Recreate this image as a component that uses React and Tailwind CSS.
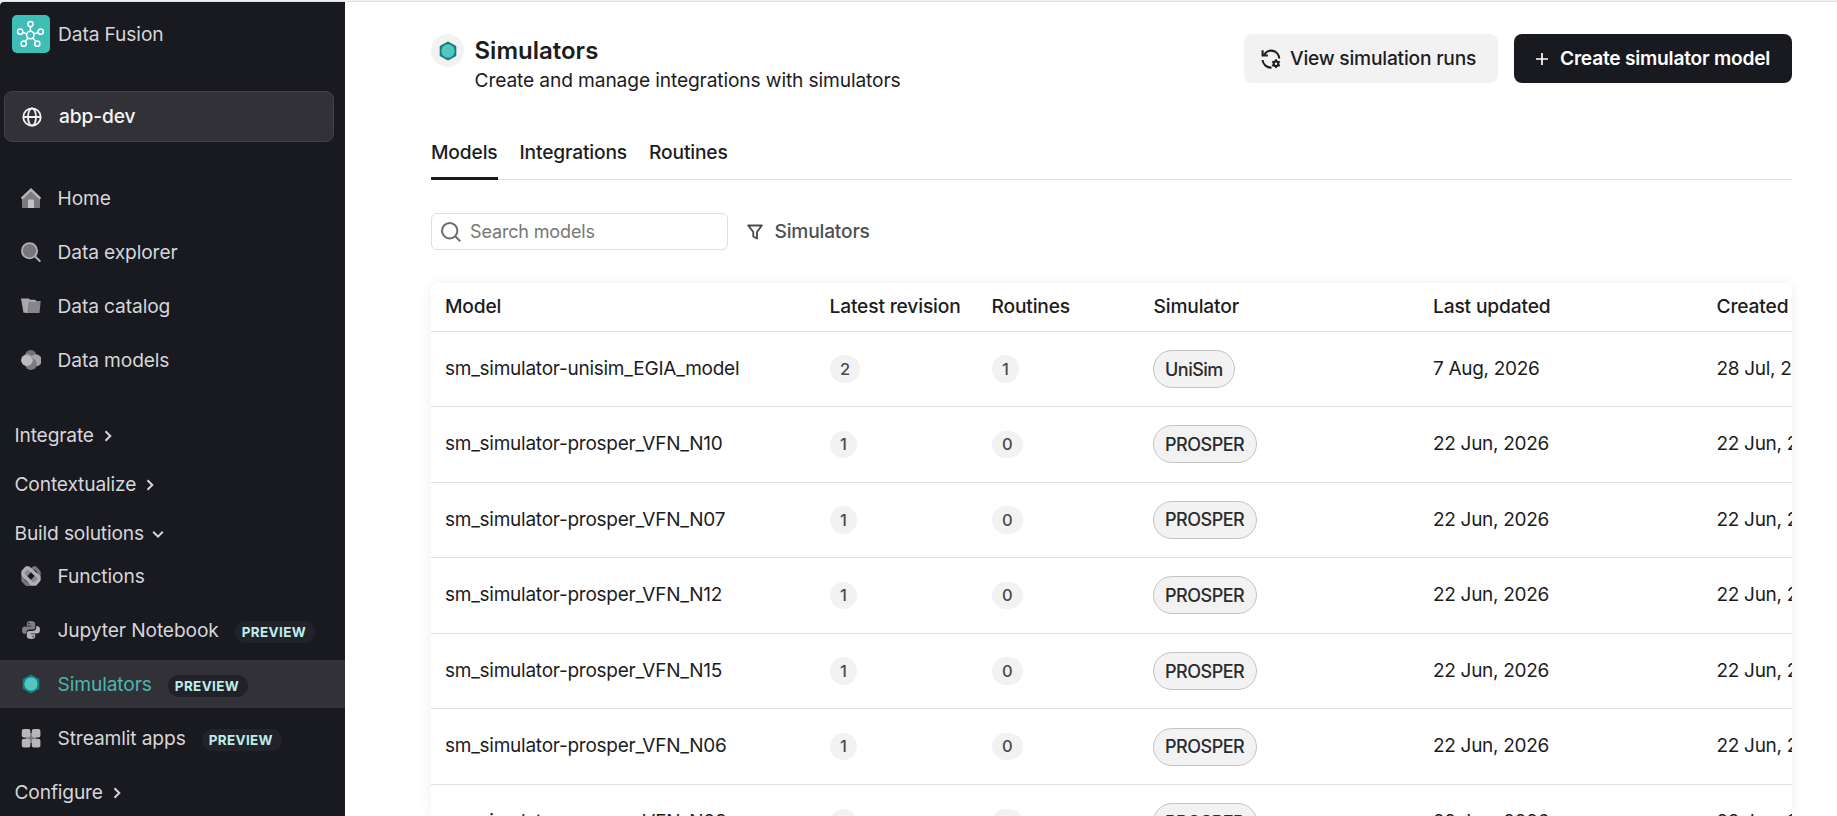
import React from "react";

const Home = () => (
  <svg viewBox="0 0 20 20" className="size-5 shrink-0">
    <path d="M1 9l9-7 9 7v10a1 1 0 0 1-1 1H2a1 1 0 0 1-1-1z" fill="#7b7b80" />
    <path d="M7 20v-7.500a1 1 0 0 1 1-1h4a1 1 0 0 1 1 1V20z" fill="#c3c3c6" />
    <path d="M1.400 9.800L10 1.700l8.600 8.100" fill="none" stroke="#b5b5b9" strokeWidth="2.500" strokeLinecap="round" />
  </svg>
);
const Explorer = () => (
  <svg viewBox="0 0 20 20" className="size-5 shrink-0">
    <circle cx="8.500" cy="8.700" r="7.600" fill="#77777b" stroke="#b1b1b5" strokeWidth="1.800" />
    <path d="M14.200 14.500l4.500 4.500" stroke="#b1b1b5" strokeWidth="2" strokeLinecap="round" />
  </svg>
);
const Catalog = () => (
  <svg viewBox="0 0 20 20" className="size-5 shrink-0">
    <path d="M0 2.500h8l1 1.200h5.500v13H2.500z" fill="#a8a8ac" />
    <path d="M6.400 5.800l.8-.8h12.500L18.500 17H5.400z" fill="#85858a" />
    <path d="M5.600 17l1-10.800 1-1H15" fill="none" stroke="#c4c4c7" strokeWidth=".8" />
  </svg>
);
const DataModels = () => (
  <svg viewBox="0 0 20 20" className="size-5 shrink-0">
    <circle cx="9.700" cy="5.900" r="5.900" fill="#717176" />
    <circle cx="14.300" cy="10.200" r="5.700" fill="#a3a3a7" />
    <circle cx="9.900" cy="14" r="6" fill="#7b7b80" />
    <path d="M11.500 8.200a6 6 0 0 1 3.800 8.200A5.700 5.700 0 0 0 14.500 4.500z" fill="#a3a3a7" />
    <circle cx="5.900" cy="10.200" r="5.800" fill="#bcbcbf" />
    <path d="M4.500 4.800c3-1 6.200.5 7 4" stroke="#9a9a9e" strokeWidth="1.300" fill="none" />
  </svg>
);
const Functions = () => (
  <svg viewBox="0 0 20 20" className="size-5 shrink-0" fill="none" strokeLinejoin="round">
    <path d="M12.800 2h1.700L18 6v3L9 18.200H5.500L2 14.500v-3.500z" stroke="#77777b" strokeWidth="3.400" />
    <path d="M7.200 1.900h-1.700L2 5.800v3L11 18h3.500L18 14v-3z" fill="#8a8a8e" stroke="#b0b0b4" strokeWidth="3.400" />
    <path d="M10 6.300l3.700 3.700-3.700 3.700L6.300 10z" fill="#191920" />
  </svg>
);
const Python = () => (
  <svg viewBox="0 0 20 20" className="size-5 shrink-0">
    <path d="M9.800 1C7 1 5.800 2 5.800 3.800v2h4.400v.7H4C1.800 6.500 1 8 1 10.200s.8 3.500 2.400 3.500h2v-1.500c0-1.700 1.300-2.800 3-2.800h3.800c1.200 0 2-1 2-2.200V3.800C14.200 2 12.600 1 9.800 1z" fill="#7f7f83" />
    <path d="M10.200 19c2.800 0 4-1 4-2.800v-2H9.800v-.7H16c2.200 0 3-1.500 3-3.700s-.8-3.500-2.400-3.500h-1.500v1.800c0 1.700-1.300 2.800-3 2.800H8.300c-1.600 0-2.500 1-2.500 2.400v2.900c0 1.800 1.600 2.800 4.400 2.800z" fill="#b1b1b5" />
    <circle cx="7.900" cy="3.500" r=".8" fill="#191920" />
    <circle cx="12.100" cy="16.500" r=".8" fill="#191920" />
  </svg>
);
const Hexagon = () => (
  <svg viewBox=".4 .4 19.2 19.2" className="size-5 shrink-0">
    <path d="M10 2l6.900 4v8L10 18l-6.900-4V6z" fill="#127f80" stroke="#127f80" strokeWidth="2.200" strokeLinejoin="round" />
    <circle cx="10" cy="10" r="6.400" fill="#56c5c2" />
  </svg>
);
const Grid = () => (
  <svg viewBox="0 0 20 20" className="size-5 shrink-0">
    <rect x="5" y="5" width="10" height="10" fill="#77777b" />
    <rect x=".8" y="1" width="8.600" height="8.600" rx="2" fill="#b7b7ba" />
    <rect x="10.800" y="1" width="8.600" height="8.600" rx="2" fill="#b7b7ba" />
    <rect x=".8" y="10.800" width="8.600" height="8.600" rx="2" fill="#b7b7ba" />
    <rect x="10.800" y="10.800" width="8.600" height="8.600" rx="2" fill="#b7b7ba" />
  </svg>
);
const Logo = () => (
  <svg viewBox="0 0 38 38" className="size-[38px] shrink-0" fill="none" stroke="#fff" strokeWidth="1.500">
    <rect width="38" height="38" rx="5" fill="#3fbdb7" stroke="none" />
    <circle cx="18.300" cy="20" r="3.700" />
    <circle cx="18.500" cy="9" r="2.600" />
    <circle cx="8.200" cy="16.700" r="2.600" />
    <circle cx="28.700" cy="16.700" r="2.600" />
    <circle cx="11.700" cy="28.700" r="2.600" />
    <circle cx="25.300" cy="28.700" r="2.600" />
    <path d="M18.400 11.600v4.700M10.700 17.500l4.100 1.300M26.200 17.500l-4.300 1.300M13.200 26.600l2.800-3.600M23.800 26.600L20.700 23" />
  </svg>
);
const Globe = () => (
  <svg viewBox="0 0 20 20" className="size-5 shrink-0" fill="none" stroke="#f3f3f3" strokeWidth="1.800">
    <circle cx="10" cy="10" r="8.700" />
    <ellipse cx="10" cy="10" rx="4" ry="8.700" />
    <path d="M1.300 10h17.400" />
  </svg>
);
const Chevron = ({ open }) => (
  <svg viewBox="0 0 12 12" className="size-3 shrink-0" fill="none" stroke="#d6d6d8" strokeWidth="2">
    <path d={open ? "M1.200 3.800L6 8.600l4.800-4.800" : "M3.500 1.200L8.300 6l-4.800 4.800"} />
  </svg>
);
const RunsIcon = () => (
  <svg viewBox="0 0 20 20" className="size-5 shrink-0" fill="none" stroke="#1f1f23" strokeWidth="2.100">
    <path d="M3 6.200A8 8 0 0 1 18.200 9.500M1.600 1.200v5.300h5.300M1.500 11A8.600 8.600 0 0 0 10.500 18.600" />
    <circle cx="15" cy="14.700" r="2.300" strokeWidth="2.100" />
    <path d="M15 10.300v2M15 17.100v2M11.200 12.500l1.700 1M17.100 15.900l1.700 1M11.200 16.900l1.700-1M17.100 13.500l1.700-1" strokeWidth="1.900" />
  </svg>
);

const Preview = ({ dark }) => (
  <span className={`mt-1 ml-4 flex h-[22px] items-center rounded-full pr-[9px] pl-[7px] text-[13.5px] font-bold tracking-[0.35px] text-[#bdece9] ${dark ? "bg-[#212229]" : "bg-[#222329]"}`}>
    PREVIEW
  </span>
);

const NavItem = ({ icon, label, preview, active }) => (
  <div className={`flex h-12 shrink-0 items-center pl-[21px] ${active ? "bg-[#323137] text-[#4bb5b0]" : ""}`}>
    {icon}
    <span className="ml-[16.5px]">{label}</span>
    {preview && <Preview dark={active} />}
  </div>
);

const Section = ({ label, open }) => (
  <div className="flex h-[49px] shrink-0 items-center gap-2 pl-[14.5px] tracking-[-0.16px]">
    <span>{label}</span>
    <Chevron open={open} />
  </div>
);

const Sidebar = () => (
  <aside className="flex w-[345px] shrink-0 flex-col overflow-hidden rounded-tl-[4px] bg-[#191920] text-[19.2px] tracking-[-0.12px] text-[#d6d6d8]">
    <div className="flex items-center gap-2 pt-[13px] pl-3">
      <Logo />
      <span>Data Fusion</span>
    </div>
    <div className="mt-[38px] ml-1 flex h-[51px] w-[330px] shrink-0 items-center gap-[17px] rounded-lg border border-[#424147] bg-[#323137] pl-[17px] font-medium text-[#f5f5f5]">
      <Globe />
      <span>abp-dev</span>
    </div>
    <nav className="mt-8 flex flex-col gap-1.5">
      <NavItem icon={<Home />} label="Home" />
      <NavItem icon={<Explorer />} label="Data explorer" />
      <NavItem icon={<Catalog />} label="Data catalog" />
      <NavItem icon={<DataModels />} label="Data models" />
    </nav>
    <div className="mt-[27px]">
      <Section label="Integrate" />
      <Section label="Contextualize" />
      <Section label="Build solutions" open />
    </div>
    <nav className="-mt-[6px] flex flex-col gap-1.5">
      <NavItem icon={<Functions />} label="Functions" />
      <NavItem icon={<Python />} label="Jupyter Notebook" preview />
      <NavItem icon={<Hexagon />} label="Simulators" preview active />
      <NavItem icon={<Grid />} label="Streamlit apps" preview />
    </nav>
    <div className="mt-1.5">
      <Section label="Configure" />
    </div>
  </aside>
);

const rows = [
  ["sm_simulator-unisim_EGIA_model", 2, 1, "UniSim", "7 Aug, 2026", "28 Jul, 2026"],
  ...["N10", "N07", "N12", "N15", "N06", "N08"].map((n) => [
    "sm_simulator-prosper_VFN_" + n, 1, 0, "PROSPER", "22 Jun, 2026", "22 Jun, 2026",
  ]),
];

const cols = "grid grid-cols-[384.5px_162px_162px_279.5px_283.5px_200px] items-center pl-3.5";

const Count = ({ children }) => (
  <span className="flex h-[27.5px] w-fit items-center rounded-full bg-[#f2f2f2] px-[10.5px] text-[16.5px] font-medium text-[#4a4a4d]">
    {children}
  </span>
);

const Table = () => (
  <div className="mt-[33px] min-h-0 w-[1361px] flex-1 rounded-t-lg shadow-[0_0_14px_rgba(0,0,0,0.07)]">
    <div className="h-full overflow-hidden rounded-t-lg bg-white">
      <div className={`h-[49px] border-b border-[#dfdfdf] pb-0.5 font-medium tracking-[-0.16px] ${cols}`}>
        {["Model", "Latest revision", "Routines", "Simulator", "Last updated", "Created"].map((h) => (
          <span key={h}>{h}</span>
        ))}
      </div>
      {rows.map(([model, rev, routines, sim, updated, created], i) => (
        <div key={model} className={`border-b border-[#dfdfdf] text-[19px] tracking-[-0.25px] ${i === 0 ? "h-[75px]" : "h-[75.6px]"} ${cols}`}>
          <span>{model}</span>
          <span><Count>{rev}</Count></span>
          <span><Count>{routines}</Count></span>
          <span className="-ml-px flex">
            <span className="flex h-[38px] items-center rounded-full border border-[#c3c3c3] bg-[#f2f2f2] px-[11.5px] text-[18px] font-medium tracking-[-0.5px] text-[#2b2b2e]">{sim}</span>
          </span>
          <span className="tracking-[-0.3px]">{updated}</span>
          <span className="tracking-[-0.3px]">{created}</span>
        </div>
      ))}
    </div>
  </div>
);

export default function App() {
  return (
    <div className="flex h-[816px] flex-col overflow-hidden bg-white font-['Inter',sans-serif] text-[19.2px] whitespace-nowrap text-[#1c1c1f]">
      <div className="h-0.5 shrink-0 border-b border-[#dfe1e1] bg-[#f0f1f1]" />
      <div className="flex min-h-0 flex-1">
        <Sidebar />
        <main className="flex min-w-0 flex-1 flex-col pl-[86px]">
          <header className="mt-8 flex h-[59px] w-[1361px] shrink-0 items-start">
            <div className="flex size-[33px] items-center justify-center rounded-full bg-[#f2f2f2]"><Hexagon /></div>
            <div className="ml-[10.5px] flex-1">
              <h1 className="pt-px text-[24px] leading-8 font-semibold">Simulators</h1>
              <p className="-mt-px leading-7 tracking-[-0.13px]">Create and manage integrations with simulators</p>
            </div>
            <button className="flex h-[49px] w-[254px] items-center gap-[9px] rounded-lg bg-[#f2f2f2] pl-[17px] font-medium tracking-[-0.21px]"><RunsIcon />View simulation runs</button>
            <button className="ml-4 flex h-[49px] w-[278px] items-center gap-3 rounded-lg bg-[#191920] pl-[22px] font-semibold tracking-[-0.24px] text-white">
              <svg viewBox="0 0 12 12" className="size-3" stroke="#fff" strokeWidth="1.700"><path d="M6 0v12M0 6h12" /></svg>
              Create simulator model
            </button>
          </header>
          <div className="mt-[38px] flex h-[49px] w-[1361px] shrink-0 gap-[22px] border-b border-[#dfdfdf] font-medium tracking-[-0.15px]">
            <div className="h-[49px] border-b-[3px] border-[#191920] pt-[7px]">Models</div>
            <div className="pt-[7px]">Integrations</div>
            <div className="pt-[7px]">Routines</div>
          </div>
          <div className="mt-[33px] flex h-[37px] shrink-0 items-center">
            <div className="flex h-[37px] w-[297px] items-center gap-[9px] rounded-md border border-[#dedede] pl-[9px] text-[18px] tracking-[-0.15px] text-[#777]">
              <svg viewBox="0 0 20 20" className="size-5" fill="none" stroke="#6d6d70" strokeWidth="2"><circle cx="8.700" cy="8.700" r="7.700" /><path d="M14.200 14.200l5 5" /></svg>
              Search models
            </div>
            <svg viewBox="0 0 16 16" className="ml-[19px] size-4" fill="none" stroke="#4a4a4d" strokeWidth="1.900" strokeLinejoin="round"><path d="M1.200 1.500h13.600L10 8v6.500L6.300 12.500V8z" /></svg>
            <span className="ml-[11.5px] font-medium tracking-[-0.2px] text-[#4f4f52]">Simulators</span>
          </div>
          <Table />
        </main>
      </div>
    </div>
  );
}
